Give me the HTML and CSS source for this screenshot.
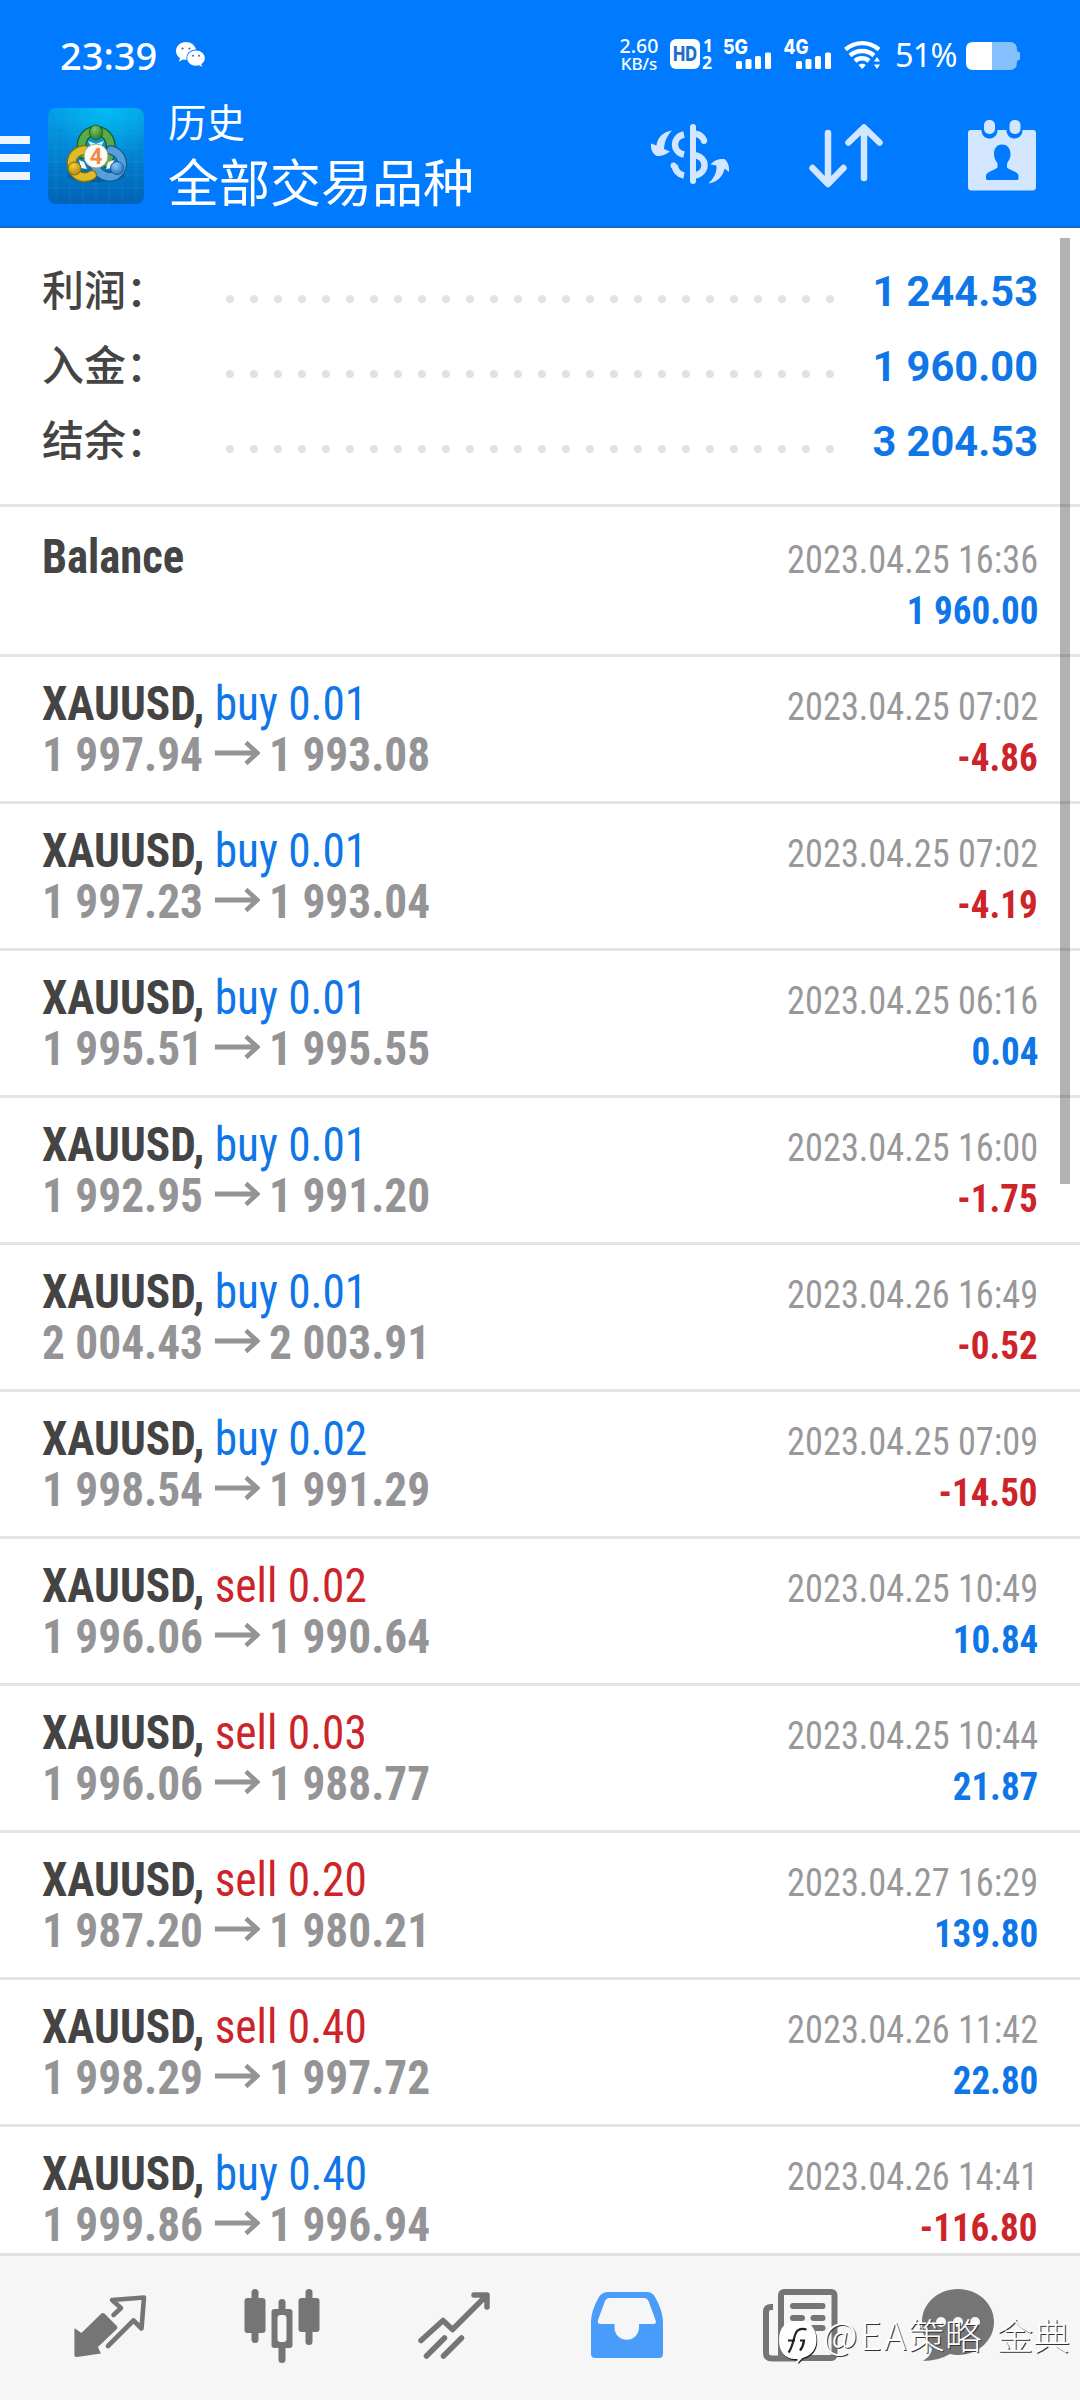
FILE: index.html
```html
<!DOCTYPE html>
<html lang="zh-CN">
<head>
<meta charset="utf-8">
<title>历史</title>
<link rel="stylesheet" href="styles.css">
</head>
<body>
<div class="app">
  <header class="header">
    <div class="status">
      <span class="clock">23:39</span>
      <svg class="wechat" width="29" height="25" viewBox="0 0 29 25">
        <path fill="#fff" d="M10 0C4.500 0 0 3.900 0 9c0 3 1.500 5.500 4 7l-1 3.700 4-2.200c1.200.3 2.400.4 3.600.3C9.500 12 14 7.500 20 7.500 19 3 15 0 10 0z"/>
        <path fill="#fff" d="M20 8.600c-5 0-8.800 3.400-8.800 7.600s3.900 7.500 8.800 7.500c1 0 2-.1 2.900-.4l3.200 1.500-.8-2.800c2.200-1.400 3.500-3.500 3.500-5.800 0-4.200-4-7.600-8.800-7.600z"/>
        <g fill="#2a6fc4"><circle cx="6.500" cy="6.500" r="1.100"/><circle cx="13.500" cy="6.500" r="1.100"/><circle cx="17" cy="13.700" r="1"/><circle cx="23" cy="13.700" r="1"/></g>
      </svg>
      <div class="speed"><span>2.60</span><span>KB/s</span></div>
      <svg class="sig" width="166" height="34" viewBox="668 37 166 34">
        <rect x="671" y="39" width="30" height="30" rx="6" fill="#fff"/>
        <text class="hd" x="686" y="60.500" text-anchor="middle" textLength="24" lengthAdjust="spacingAndGlyphs">HD</text>
        <text class="tag" x="704" y="52">1</text>
        <text class="tag" x="703" y="69">2</text>
        <text class="net" x="724" y="53.500" textLength="25" lengthAdjust="spacingAndGlyphs">5G</text>
        <text class="net" x="784.500" y="53.500" textLength="25" lengthAdjust="spacingAndGlyphs">4G</text>
        <g fill="#fff">
          <rect x="737" y="61" width="6" height="8" rx="1.500"/><rect x="746.500" y="59" width="6" height="10" rx="1.500"/><rect x="756" y="56" width="6" height="13" rx="1.500"/><rect x="766" y="52.500" width="6" height="16.500" rx="1.500"/>
          <rect x="797" y="61" width="6" height="8" rx="1.500"/><rect x="806.500" y="59" width="6" height="10" rx="1.500"/><rect x="816" y="56" width="6" height="13" rx="1.500"/><rect x="826" y="52.500" width="6" height="16.500" rx="1.500"/>
        </g>
      </svg>
      <svg class="wifi" width="38" height="30" viewBox="844 40 38 30">
        <g fill="none" stroke="#fff" stroke-width="4.400">
          <path d="M846.500 49.500c10-8.500 23.500-8.500 33.500 0"/><path d="M851 55.500c7-6 17-6 24 0"/><path d="M856 61c4-3.600 10-3.600 14 0"/>
        </g>
        <path fill="#fff" d="M859.500 65c2-1.800 5.300-1.800 7.300 0l-3.600 4zM875 61.500l3-4.500 3 4.500zM875 64.500h6l-3 4.500z"/>
      </svg>
      <span class="pct">51%</span>
      <svg class="batt" width="54" height="28" viewBox="0 0 54 28">
        <path fill="#88bfff" d="M26 0h18q7 0 7 8v1l3 1.500v7l-3 1.500v1q0 8-7 8H26z"/>
        <path fill="#fff" d="M26 0H7Q0 0 0 7v14q0 7 7 7h19z"/>
      </svg>
    </div>
    <div class="toolbar">
      <div class="burger"><i></i><i></i><i></i></div>
      <svg class="logo" width="96" height="96" viewBox="0 0 96 96">
        <defs>
          <linearGradient id="sky" x1="0" y1="0" x2="0" y2="1"><stop offset="0" stop-color="#04a0e6"/><stop offset=".5" stop-color="#0282d0"/><stop offset="1" stop-color="#0262b4"/></linearGradient>
          <radialGradient id="glow" cx=".6" cy="0" r=".55"><stop offset="0" stop-color="#00c8f8" stop-opacity=".7"/><stop offset="1" stop-color="#00c8f8" stop-opacity="0"/></radialGradient>
          <radialGradient id="gr" cx=".4" cy=".3" r=".8"><stop offset="0" stop-color="#7fc46c"/><stop offset="1" stop-color="#1d7426"/></radialGradient>
          <radialGradient id="ye" cx=".4" cy=".3" r=".8"><stop offset="0" stop-color="#f0d040"/><stop offset="1" stop-color="#a87f08"/></radialGradient>
          <radialGradient id="bl" cx=".4" cy=".3" r=".8"><stop offset="0" stop-color="#8cc8f0"/><stop offset="1" stop-color="#1c6db8"/></radialGradient>
        </defs>
        <rect width="96" height="96" rx="8" fill="url(#sky)"/><rect width="96" height="96" rx="8" fill="url(#glow)"/>
        <path d="M8 0v96M22 0v96M35 0v96M48 0v96M61 0v96M74 0v96M88 0v96M0 12h96M0 26h96M0 40h96M0 54h96M0 67h96M0 80h96" stroke="#5cc4f4" stroke-opacity=".13"/>
        <ellipse cx="48" cy="68" rx="29" ry="6" fill="#033c70" opacity=".35"/>
        <g fill="none" stroke-linecap="round">
          <path d="M35 46c-4-12 1-23 13-23s17 11 14 24l-3 8" stroke="#165c1c" stroke-width="10"/><path d="M35 46c-4-12 1-23 13-23s17 11 14 24l-3 8" stroke="#58a84c" stroke-width="7.500"/>
          <path d="M63 42c10 3 14 13 9 21-6 9-19 8-26-6" stroke="#175a98" stroke-width="10"/><path d="M63 42c10 3 14 13 9 21-6 9-19 8-26-6" stroke="#569fd8" stroke-width="7.500"/>
          <path d="M44 67c-8 5-18 1-20-8-2-10 4-16 12-17" stroke="#8d6b05" stroke-width="10"/><path d="M44 67c-8 5-18 1-20-8-2-10 4-16 12-17" stroke="#dcbc2a" stroke-width="7.500"/>
        </g>
        <path fill="#f4f8f0" d="M40 33l8 3 8-3-3 5H43zM31 52l5 2 3 7-6-1zM66 52l-6 2-2 7 6-1z"/>
        <ellipse cx="48" cy="24.500" rx="6.500" ry="7.500" fill="url(#gr)" stroke="#1c6424"/>
        <circle cx="26.500" cy="60.500" r="6.500" fill="url(#ye)" stroke="#8d6b05"/>
        <circle cx="69" cy="60" r="6.500" fill="url(#bl)" stroke="#175a98"/>
        <circle cx="48" cy="48" r="12" fill="#fafaf6" stroke="#a9a47c" stroke-width="1"/>
        <text class="four" x="48" y="56" text-anchor="middle">4</text>
      </svg>
      <div class="titles"><h1>历史</h1><p>全部交易品种</p></div>
      <svg class="act-dollar" width="80" height="64" viewBox="650 122 80 64">
        <g fill="none" stroke="#d2e6ff">
          <path d="M693 127v54" stroke-width="6" stroke-linecap="round"/>
          <path d="M684 134.500c-12 2.500-12 17.500 0 20" stroke-width="6.500"/>
          <path d="M674.500 165c1 6 4 9.500 9.500 10.500" stroke-width="6.500"/>
          <path d="M694 133.500c5 .5 9 3 10.500 8" stroke-width="6.500"/>
          <path d="M694 155c14 2 14 18.500 0 20.500" stroke-width="6.500"/>
          <path d="M673.500 165.500v0M704 141v0" stroke-width="6" stroke-linecap="round"/>
        </g>
        <path fill="#d2e6ff" d="M672 130.500c-9 1.500-14.500 6.500-15.500 15l-5.500-2c-.5 5 1 9.500 5.500 12.500 5 .5 10-1.500 13.500-4.500l-6-2.500c.5-8 3-13 8-18.500z"/>
        <path fill="#d2e6ff" d="M708.500 183.500c9-1.500 14.500-7 16-15l4.500 3.500c.5-5-1-10-4.500-13-5-.5-10 .5-14 5.500l6 1c.5 7.500-3 13-8 18z"/>
      </svg>
      <svg class="act-sort" width="76" height="66" viewBox="808 123 76 66">
        <path d="M828 133v50M812.500 168l15.500 16 15.500-16M864 178v-50M848.500 142.500l15.500-15 15.500 15" fill="none" stroke="#d2e6ff" stroke-width="6.500" stroke-linecap="round" stroke-linejoin="round"/>
      </svg>
      <svg class="act-cal" width="70" height="72" viewBox="967 119 70 72">
        <path fill="#d2e6ff" d="M971 130h10.500v1c1 10 15 10 16 0v-1h9v1c1 10 15 10 16 0v-1H1033q3 0 3 3v54q0 3.500-3.500 3.500h-61q-3.500 0-3.500-3.500v-54q0-3 3-3z"/>
        <rect x="984" y="120" width="11" height="14" rx="5" fill="#d2e6ff"/><rect x="1009.500" y="120" width="11" height="14" rx="5" fill="#d2e6ff"/>
        <path fill="#007aff" d="M1002 144.500c6 0 8.500 4.500 8.500 10 0 4-2 6.500-3.500 9v4c3 3 11 4 11.500 8v3q0 1.500-1.500 1.500h-29.500q-1.500 0-1.500-1.500v-3c.5-4 8.500-5 11.500-8v-4c-1.500-2.500-3.500-5-3.500-9 0-5.500 2-10 8-10z"/>
      </svg>
    </div>
  </header>

  <main class="content">
    <section class="summary">
      <div class="sum"><span class="label">利润：</span><span class="dots"></span><b>1 244.53</b></div>
      <div class="sum"><span class="label">入金：</span><span class="dots"></span><b>1 960.00</b></div>
      <div class="sum"><span class="label">结余：</span><span class="dots"></span><b>3 204.53</b></div>
    </section>
    <svg width="0" height="0" class="defs"><symbol id="arr" viewBox="0 0 48 26"><path d="M0 13h45M33 2.500L45 13 33 23.500" fill="none" stroke="#949496" stroke-width="4.800"/></symbol></svg>
    <section class="deals">
      <article class="deal first"><div class="line"><span class="sym balance">Balance</span><time>2023.04.25 16:36</time></div><div class="line"><span></span><span class="val">1 960.00</span></div></article>
      <article class="deal"><div class="line"><span class="sym">XAUUSD, <em>buy 0.01</em></span><time>2023.04.25 07:02</time></div><div class="line"><span class="price">1 997.94<svg><use href="#arr"/></svg>1 993.08</span><span class="val neg">-4.86</span></div></article>
      <article class="deal"><div class="line"><span class="sym">XAUUSD, <em>buy 0.01</em></span><time>2023.04.25 07:02</time></div><div class="line"><span class="price">1 997.23<svg><use href="#arr"/></svg>1 993.04</span><span class="val neg">-4.19</span></div></article>
      <article class="deal"><div class="line"><span class="sym">XAUUSD, <em>buy 0.01</em></span><time>2023.04.25 06:16</time></div><div class="line"><span class="price">1 995.51<svg><use href="#arr"/></svg>1 995.55</span><span class="val">0.04</span></div></article>
      <article class="deal"><div class="line"><span class="sym">XAUUSD, <em>buy 0.01</em></span><time>2023.04.25 16:00</time></div><div class="line"><span class="price">1 992.95<svg><use href="#arr"/></svg>1 991.20</span><span class="val neg">-1.75</span></div></article>
      <article class="deal"><div class="line"><span class="sym">XAUUSD, <em>buy 0.01</em></span><time>2023.04.26 16:49</time></div><div class="line"><span class="price">2 004.43<svg><use href="#arr"/></svg>2 003.91</span><span class="val neg">-0.52</span></div></article>
      <article class="deal"><div class="line"><span class="sym">XAUUSD, <em>buy 0.02</em></span><time>2023.04.25 07:09</time></div><div class="line"><span class="price">1 998.54<svg><use href="#arr"/></svg>1 991.29</span><span class="val neg">-14.50</span></div></article>
      <article class="deal"><div class="line"><span class="sym">XAUUSD, <em class="neg">sell 0.02</em></span><time>2023.04.25 10:49</time></div><div class="line"><span class="price">1 996.06<svg><use href="#arr"/></svg>1 990.64</span><span class="val">10.84</span></div></article>
      <article class="deal"><div class="line"><span class="sym">XAUUSD, <em class="neg">sell 0.03</em></span><time>2023.04.25 10:44</time></div><div class="line"><span class="price">1 996.06<svg><use href="#arr"/></svg>1 988.77</span><span class="val">21.87</span></div></article>
      <article class="deal"><div class="line"><span class="sym">XAUUSD, <em class="neg">sell 0.20</em></span><time>2023.04.27 16:29</time></div><div class="line"><span class="price">1 987.20<svg><use href="#arr"/></svg>1 980.21</span><span class="val">139.80</span></div></article>
      <article class="deal"><div class="line"><span class="sym">XAUUSD, <em class="neg">sell 0.40</em></span><time>2023.04.26 11:42</time></div><div class="line"><span class="price">1 998.29<svg><use href="#arr"/></svg>1 997.72</span><span class="val">22.80</span></div></article>
      <article class="deal"><div class="line"><span class="sym">XAUUSD, <em>buy 0.40</em></span><time>2023.04.26 14:41</time></div><div class="line"><span class="price">1 999.86<svg><use href="#arr"/></svg>1 996.94</span><span class="val neg">-116.80</span></div></article>
    </section>
    <div class="scrollbar"></div>
  </main>

  <nav class="tabs">
    <svg width="76" height="80" viewBox="73 2286 76 80">
      <path fill="#757575" d="M74.400 2329.500q0-1.500 1.500-.5l5.500 4 19.500-19q2-2 4 0l11.500 11.500q2 2 0 4l-18.500 17.500 3 6.500-24 3.500q-2.500.5-2.500-2z"/>
      <path d="M113.500 2315l7.500-7-9-8 32-2.500-2.500 31-8-8-25.500 25.500" fill="none" stroke="#757575" stroke-width="4.600" stroke-linejoin="round" stroke-linecap="round"/>
    </svg>
    <svg width="76" height="80" viewBox="243.500 2286 76 80" fill="#757575">
      <rect x="251" y="2289" width="7" height="54" rx="3.500"/><rect x="244" y="2298" width="21" height="35" rx="3"/>
      <rect x="305" y="2289" width="7" height="56" rx="3.500"/><rect x="298" y="2298" width="21" height="34" rx="3"/>
      <rect x="278" y="2299" width="7" height="64" rx="3.500"/><rect x="271" y="2309" width="21" height="39" rx="3"/><rect x="277" y="2315" width="9" height="27" rx="3" fill="#f6f6f6"/>
    </svg>
    <svg width="76" height="80" viewBox="415.500 2286 76 80">
      <path d="M420.500 2340.500l22-20 9.500 9 34-34M473.500 2295h13v12M426 2356l18-18M443 2356l18-18" fill="none" stroke="#757575" stroke-width="5.500" stroke-linecap="round" stroke-linejoin="round"/>
    </svg>
    <svg width="76" height="80" viewBox="588.500 2286 76 80">
      <path fill="#4a9cfa" fill-rule="evenodd" d="M608 2292h38q6 0 8.500 5c5 9 8 17 8 26v31q0 4-4 4h-64q-4 0-4-4v-31c0-9 3-17 8-26q3-5 9.500-5zm1 6q-3 0-4.500 3l-7 19q-1 4 2.500 4h14v3c0 17 24.500 17 24.500 0v-3H653q3.500 0 2-4l-7-19q-1.500-3-4.500-3z"/>
    </svg>
    <svg width="76" height="80" viewBox="762 2286 76 80">
      <rect x="781" y="2292" width="53.500" height="66" rx="3" fill="none" stroke="#757575" stroke-width="6"/>
      <path d="M773 2307h-2q-5 0-5 5v41q0 5.500 6 5.500h24" fill="none" stroke="#757575" stroke-width="6"/>
      <path d="M793 2306h29.500M793 2318h9M813.500 2318h9M793 2328h9M813.500 2328h9" stroke="#757575" stroke-width="6" stroke-linecap="round"/>
    </svg>
    <svg width="76" height="80" viewBox="920 2286 76 80">
      <path fill="#757575" d="M958 2289c20 0 36 14.500 36 33s-16 33-36 33q-4 0-8-1-12 7-27 7 8-5 9-12c-6-6-10-15-10-27 0-18.500 16-33 36-33z"/>
      <g fill="#f6f6f6"><circle cx="941" cy="2322" r="5"/><circle cx="958" cy="2322" r="5"/><circle cx="975" cy="2322" r="5"/></g>
    </svg>
    <div class="credit">
      <svg width="40" height="46" viewBox="778 2320 40 46">
        <path d="M797 2321c14 0 19.500 8 19.500 19 0 10-6 16-14 18l-5 5v-4c-13 1-18.500-8-18.500-19 0-12 6-19 18-19z" fill="#222" transform="translate(.8 1.300)"/>
        <path d="M797 2321c14 0 19.500 8 19.500 19 0 10-6 16-14 18l-5 5v-4c-13 1-18.500-8-18.500-19 0-12 6-19 18-19z" fill="#fff"/>
        <path d="M806.500 2329.500c-9-2.500-11 3-12.500 9s-3 11-5.500 14M788 2340.500h7M800 2340.500h4c-.5 4-1.500 7-4 10" fill="none" stroke="#222" stroke-width="2.200"/>
      </svg>
      <span class="handle"><span class="latin">@EA</span>策略 金典</span>
    </div>
  </nav>
</div>
</body>
</html>
```
FILE: styles.css
```css
* { box-sizing: border-box; margin: 0; padding: 0; }
body { width: 1080px; height: 2400px; overflow: hidden; background: #fff; font-family: Roboto, "Noto Sans CJK SC", sans-serif; }
svg { display: block; flex: none; }
.app { display: flex; flex-direction: column; height: 2400px; }

.header { height: 228px; background: #007aff; color: #fff; border-bottom: 2px solid #1c66cc; flex: none; }
.status { height: 108px; display: flex; align-items: flex-start; padding: 30px 0 0 60px; font-family: "Noto Sans", sans-serif; }
.clock { width: 116px; font-size: 38px; font-weight: 500; line-height: 50px; white-space: nowrap; }
.wechat { margin-top: 12px; }
.speed { display: flex; flex-direction: column; align-items: center; width: 42px; margin: 6px 7px 0 413px; font-weight: 500; }
.speed span { font-size: 19.500px; line-height: 20px; }
.speed span + span { font-size: 17px; line-height: 15px; }
.sig { margin-top: 7px; overflow: visible; }
.hd { font: 800 20px Inter, sans-serif; fill: #1c6fd0; }
.tag { font: 700 17.500px "Noto Sans", sans-serif; fill: #fff; }
.net { font: 800 19.500px Inter, sans-serif; fill: #fff; }
.wifi { margin: 10px 0 0 10px; }
.pct { width: 71px; margin-left: 14px; font-size: 32.500px; line-height: 50px; letter-spacing: -.8px; white-space: nowrap; }
.batt { margin-top: 12px; }

.toolbar { display: flex; align-items: flex-start; }
.burger { width: 30px; display: grid; gap: 10px; margin: 28px 18px 0 0; }
.burger i { height: 8px; background: #eef5ff; }
.four { font: 700 22px Roboto, sans-serif; fill: #f08a4b; }
.titles { width: 482px; margin: -15px 0 0 24px; font-family: "Noto Sans CJK SC", sans-serif; }
.titles h1 { font-size: 38.500px; font-weight: 400; line-height: 54px; }
.titles p { font-size: 51px; line-height: 66px; }
.act-dollar { margin-top: 14px; }
.act-sort { margin: 15px 0 0 78px; }
.act-cal { margin: 11px 0 0 83px; }

.content { position: relative; flex: 1; min-height: 0; overflow: hidden; }
.summary { height: 279px; padding: 25px 43px 0 42px; border-bottom: 3px solid #e4e4e4; }
.sum { height: 75px; display: flex; align-items: center; }
.label { width: 176px; margin-top: -6px; font: 500 42px/69px "Noto Sans CJK SC", sans-serif; color: #444; }
.dots { width: 624px; height: 8px; margin-top: 17px; background: radial-gradient(circle at 12px 4px, #e2e2e2 3.600px, transparent 4.400px) 0 0 / 24px 8px; }
.sum b { margin: 2px -1px 0 auto; font-size: 41.600px; color: #0f76e8; }
.defs { position: absolute; }
.deal { height: 147px; padding: 21px 42px 0 42px; border-bottom: 3px solid #e4e4e4; font-stretch: 75%; font-family: "Roboto Condensed", Roboto, sans-serif; }
.deal.first { height: 150px; padding-top: 24px; }
.line { height: 51px; display: flex; justify-content: space-between; align-items: baseline; font-size: 48px; line-height: 51px; white-space: nowrap; }
.line > span:empty::before { content: "\200b"; }
.sym, .price { font-weight: 700; transform: scaleX(.944); transform-origin: 0 50%; }
.sym { color: #444; }
.sym.balance { transform: scaleX(.93); }
.sym em { font-style: normal; font-weight: 400; color: #0f76e8; }
.price { color: #949496; }
.price svg { display: inline-block; width: 48px; height: 26px; margin: 0 10px 0 12px; vertical-align: 5px; }
time, .val { font-size: 39.500px; transform-origin: 100% 50%; }
time { transform: scaleX(.919); color: #98989a; }
.val { transform: scaleX(.938); font-weight: 700; color: #0f76e8; }
.val.neg, .sym em.neg { color: #cc2429; }
.scrollbar { position: absolute; left: 1060px; top: 10px; width: 10px; height: 946px; background: rgba(0, 0, 0, .3); }

.tabs { position: relative; flex: none; height: 147px; padding: 30px 0 0 25px; border-top: 3px solid #e2e2e2; background: #f6f6f6; display: grid; grid-template-columns: 171px 171px 173px 173px 174px 142px; justify-items: center; align-items: start; }
.credit { position: absolute; left: 778px; top: 64px; display: flex; color: #fff; }
.handle { margin: -6px 0 0 5px; font: 300 36.600px/40px "Noto Sans CJK SC", sans-serif; word-spacing: 7px; white-space: nowrap; text-shadow: 1px 1px 0 #333; }
.latin { font-size: 38px; letter-spacing: 2.200px; }
```
